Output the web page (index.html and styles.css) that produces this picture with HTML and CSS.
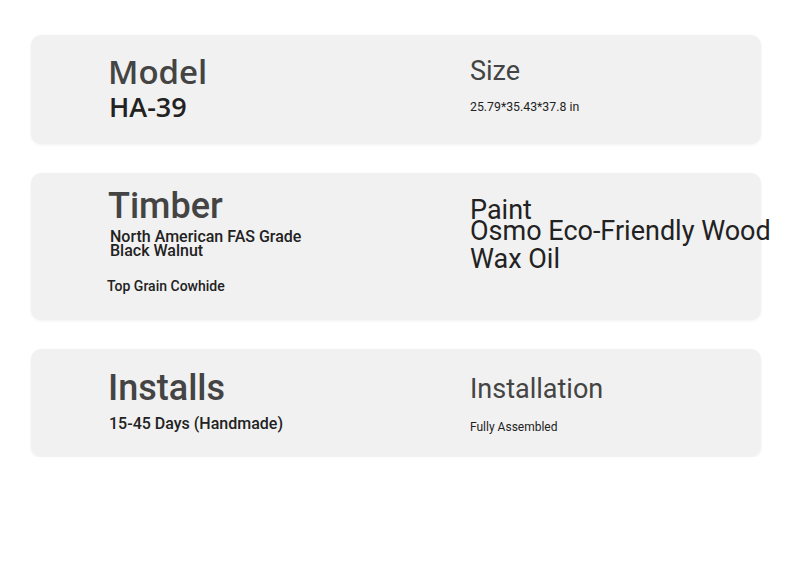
FILE: index.html
```html
<!DOCTYPE html>
<html lang="en">
<head>
<meta charset="utf-8">
<title>Product specs</title>
<link rel="stylesheet" href="styles.css">
</head>
<body>
<main class="specs">
  <section class="card card-model">
    <div class="col col-left">
      <div class="label-os">Model</div>
      <div class="value-os">HA-39</div>
    </div>
    <div class="col col-right">
      <div class="label-sm">Size</div>
      <div class="value-xs">25.79*35.43*37.8 in</div>
    </div>
  </section>
  <section class="card card-timber">
    <div class="col col-left">
      <div class="label-lg">Timber</div>
      <div class="value-wrap">North American FAS Grade<br>Black Walnut</div>
      <div class="value-sm">Top Grain Cowhide</div>
    </div>
    <div class="col col-right">
      <div class="label-paint">Paint</div>
      <div class="value-lg">Osmo Eco-Friendly Wood Wax Oil</div>
    </div>
  </section>
  <section class="card card-install">
    <div class="col col-left">
      <div class="label-lg">Installs</div>
      <div class="value-md">15-45 Days (Handmade)</div>
    </div>
    <div class="col col-right">
      <div class="label-sm">Installation</div>
      <div class="value-xs">Fully Assembled</div>
    </div>
  </section>
</main>
</body>
</html>
```

FILE: styles.css
```css
* { box-sizing: border-box; }
html, body { margin: 0; padding: 0; background: #ffffff; }
body { font-family: Roboto, "Liberation Sans", sans-serif; color: #222; }

.specs {
  display: flex;
  flex-direction: column;
  gap: 29px;
  padding: 35px 29px 0 31px;
}

.card {
  display: grid;
  grid-template-columns: 362px 1fr;
  padding-left: 77px;
  background: #f1f1f1;
  border-radius: 10px;
  box-shadow: 0 1px 3px rgba(0, 0, 0, 0.06);
}
.card-model { height: 109px; }
.card-timber { height: 147px; }
.card-install { height: 108px; }

.col { display: flex; flex-direction: column; align-items: flex-start; }

.card-model .col-left { padding-top: 17px; }
.card-model .col-right { padding-top: 20px; }
.card-timber .col-left { padding-top: 13px; }
.card-timber .col-right { padding-top: 31px; }
.card-install .col-left { padding-top: 19px; }
.card-install .col-right { padding-top: 24px; }

.label-os {
  font-family: "Open Sans", sans-serif;
  font-weight: 600;
  font-size: 33px;
  line-height: 40px;
  color: #444;
}
.value-os {
  font-family: "Open Sans", sans-serif;
  font-weight: 600;
  font-size: 27px;
  line-height: 30px;
  color: #222;
  margin-left: 1px;
}

.label-lg {
  font-size: 36px;
  font-weight: 500;
  line-height: 40px;
  color: #444;
}
.label-sm {
  font-size: 27px;
  line-height: 32px;
  color: #444;
}
.label-paint {
  font-size: 27px;
  line-height: 13px;
  color: #222;
}

.value-xs {
  font-size: 12.3px;
  line-height: 16px;
  color: #222;
  margin-top: 12px;
}
.card-install .value-xs { margin-top: 14px; font-size: 12px; }

.value-wrap {
  font-size: 16px;
  font-weight: 500;
  line-height: 14px;
  color: #222;
  margin: 4px 0 0 2px;
}
.value-sm {
  font-size: 14px;
  font-weight: 500;
  line-height: 16px;
  color: #222;
  margin-top: 20px;
  margin-left: -1px;
}
.value-md {
  font-size: 16px;
  font-weight: 500;
  line-height: 20px;
  color: #222;
  margin-top: 6px;
  margin-left: 1px;
}
.value-lg {
  font-size: 27px;
  line-height: 28px;
  color: #222;
  width: 310px;
}
```
